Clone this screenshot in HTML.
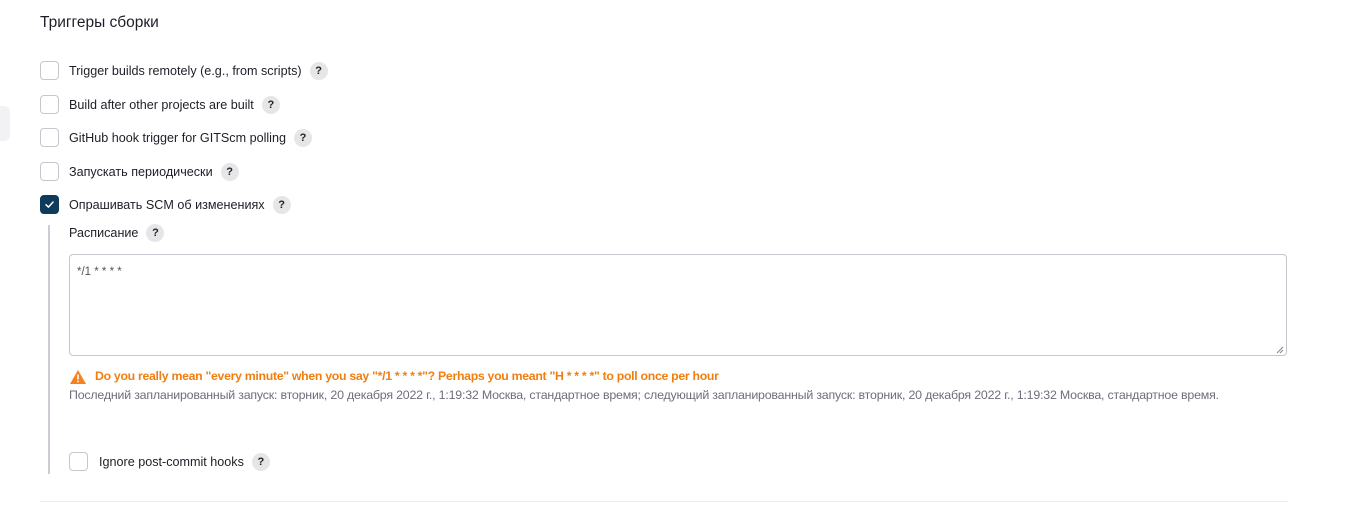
<!DOCTYPE html>
<html><head><meta charset="utf-8"><style>
body{margin:0;width:1359px;height:524px;background:#fff;font-family:"Liberation Sans",sans-serif;color:#1e1e28;position:relative;overflow:hidden}
.a{position:absolute;white-space:nowrap}
.h{left:40px;top:14px;font-size:15.5px;color:#1e1e28}
.cb{position:absolute;width:17px;height:17px;border:1.5px solid #c4c8ce;border-radius:4px;background:#fff}
.cb.on{background:#0e3a5b;border-color:#0e3a5b}
.lbl{font-size:12.6px;display:flex;align-items:center;height:20px}
.q{display:inline-block;width:18px;height:18px;border-radius:50%;background:#e6e6e8;font-size:11px;font-weight:bold;text-align:center;line-height:18px;margin-left:8px;color:#222}
</style></head><body>
<div style="position:absolute;left:0;top:106px;width:10px;height:35px;background:#f2f2f4;border-radius:0 6px 6px 0"></div>
<div class="a h">Триггеры сборки</div>

<div class="cb" style="left:40px;top:61px"></div>
<div class="a lbl" style="left:69px;top:61px">Trigger builds remotely (e.g., from scripts)<span class="q">?</span></div>
<div class="cb" style="left:40px;top:95px"></div>
<div class="a lbl" style="left:69px;top:95px">Build after other projects are built<span class="q">?</span></div>
<div class="cb" style="left:40px;top:128px"></div>
<div class="a lbl" style="left:69px;top:128px">GitHub hook trigger for GITScm polling<span class="q">?</span></div>
<div class="cb" style="left:40px;top:162px"></div>
<div class="a lbl" style="left:69px;top:162px">Запускать периодически<span class="q">?</span></div>
<div class="cb on" style="left:40px;top:195px"><svg width="17" height="17" viewBox="0 0 17 17"><path d="M5 8.8l2.4 2.3 4.6-5" stroke="#fff" stroke-width="1.5" fill="none" stroke-linecap="round" stroke-linejoin="round"/></svg></div>
<div class="a lbl" style="left:69px;top:195px">Опрашивать SCM об изменениях<span class="q">?</span></div>

<div style="position:absolute;left:48px;top:225px;width:2px;height:249px;background:#c9ced4"></div>
<div class="a lbl" style="left:69px;top:223px">Расписание<span class="q">?</span></div>
<div style="position:absolute;left:69px;top:254px;width:1216px;height:100px;border:1px solid #c3c8ce;border-radius:4px"></div>
<div class="a" style="left:77px;top:266px;font-size:11.5px;color:#555">*/1 * * * *</div>
<svg class="a" style="left:1276px;top:346px" width="8" height="8"><path d="M1 7L7 1M4 7L7 4" stroke="#888" stroke-width="1"/></svg>

<svg class="a" style="left:69px;top:369px" width="18" height="16" viewBox="0 0 18 16"><path d="M9 1L17 15H1Z" fill="#f58220"/><rect x="8.2" y="5.5" width="1.6" height="5" fill="#fff"/><rect x="8.2" y="11.7" width="1.6" height="1.6" fill="#fff"/></svg>
<div class="a" style="left:95px;top:369px;font-size:12.3px;font-weight:bold;color:#f07f10;letter-spacing:-0.3px">Do you really mean "every minute" when you say "*/1 * * * *"? Perhaps you meant "H * * * *" to poll once per hour</div>
<div class="a" style="left:69px;top:388px;font-size:12.4px;color:#6e6e7c;letter-spacing:-0.2px">Последний запланированный запуск: вторник, 20 декабря 2022 г., 1:19:32 Москва, стандартное время; следующий запланированный запуск: вторник, 20 декабря 2022 г., 1:19:32 Москва, стандартное время.</div>

<div class="cb" style="left:69px;top:452px"></div>
<div class="a lbl" style="left:99px;top:452px">Ignore post-commit hooks<span class="q">?</span></div>

<div style="position:absolute;left:40px;top:501px;width:1248px;height:1px;background:#ececee"></div>
</body></html>
